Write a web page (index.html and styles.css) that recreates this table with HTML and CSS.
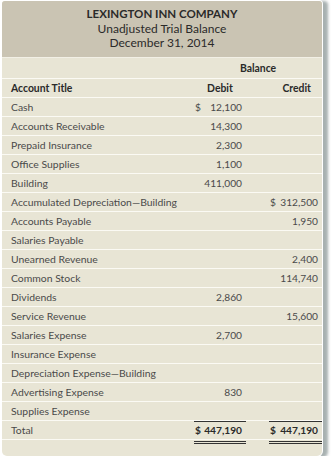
FILE: index.html
```html
<!DOCTYPE html>
<html>
<head>
<meta charset="utf-8">
<link rel="stylesheet" href="styles.css">
</head>
<body>
<div class="card">
  <div class="head">
    <div class="co">LEXINGTON INN COMPANY</div>
    <div>Unadjusted Trial Balance</div>
    <div>December 31, 2014</div>
  </div>
  <div class="row bal"><span></span><span class="span2">Balance</span></div>
  <div class="row colhead"><span>Account Title</span><span class="c">Debit</span><span class="c r">Credit</span></div>
  <div class="row"><span>Cash</span><span class="amt"><i>$</i><b>12,100</b></span><span></span></div>
  <div class="row"><span>Accounts Receivable</span><span class="amt"><b>14,300</b></span><span></span></div>
  <div class="row"><span>Prepaid Insurance</span><span class="amt"><b>2,300</b></span><span></span></div>
  <div class="row"><span>Office Supplies</span><span class="amt"><b>1,100</b></span><span></span></div>
  <div class="row"><span>Building</span><span class="amt"><b>411,000</b></span><span></span></div>
  <div class="row"><span>Accumulated Depreciation—Building</span><span></span><span class="amt"><i>$</i><b>312,500</b></span></div>
  <div class="row"><span>Accounts Payable</span><span></span><span class="amt"><b>1,950</b></span></div>
  <div class="row"><span>Salaries Payable</span><span></span><span></span></div>
  <div class="row"><span>Unearned Revenue</span><span></span><span class="amt"><b>2,400</b></span></div>
  <div class="row"><span>Common Stock</span><span></span><span class="amt"><b>114,740</b></span></div>
  <div class="row"><span>Dividends</span><span class="amt"><b>2,860</b></span><span></span></div>
  <div class="row"><span>Service Revenue</span><span></span><span class="amt"><b>15,600</b></span></div>
  <div class="row"><span>Salaries Expense</span><span class="amt"><b>2,700</b></span><span></span></div>
  <div class="row"><span>Insurance Expense</span><span></span><span></span></div>
  <div class="row"><span>Depreciation Expense—Building</span><span></span><span></span></div>
  <div class="row"><span>Advertising Expense</span><span class="amt"><b>830</b></span><span></span></div>
  <div class="row"><span>Supplies Expense</span><span></span><span></span></div>
  <div class="row total"><span>Total</span><span class="amt tot"><i>$</i><b>447,190</b></span><span class="amt tot"><i>$</i><b>447,190</b></span></div>
</div>
</body>
</html>
```
FILE: styles.css
```css
html, body {
  margin: 0;
  padding: 0;
  background: #ffffff;
}
body {
  font-family: Lato, "Open Sans", sans-serif;
}
.card {
  width: 320px;
  margin: 1px 0 0 2px;
  background: #e8e5d5;
  border-radius: 3px 3px 5px 5px;
  padding-bottom: 16px;
  box-shadow: 0 0 0 1px #ffffff, 5px 1px 3px 1px rgba(110, 125, 125, 0.6);
}
.head {
  background: #cac4b3;
  border-radius: 3px 3px 0 0;
  text-align: center;
  color: #2a2a2a;
  font-size: 12px;
  line-height: 14.5px;
  padding: 6px 0 6px;
  border-bottom: 1px solid #f2f0e6;
}
.head .co {
  font-weight: bold;
  font-size: 11.5px;
}
.row {
  display: grid;
  grid-template-columns: minmax(0, 1fr) 52px 53px;
  column-gap: 23px;
  padding-left: 9px;
  height: 18px;
  align-items: center;
  border-bottom: 1px solid #fbfaf4;
  font-size: 10.4px;
  color: #4a4a4a;
  white-space: nowrap;
}
.row.bal {
  height: 20px;
  font-weight: bold;
  color: #2a2a2a;
}
.span2 {
  grid-column: 2 / 4;
  text-align: center;
}
.colhead {
  font-weight: bold;
  color: #2a2a2a;
}
.c {
  text-align: center;
}
.c.r {
  text-align: right;
  padding-right: 11px;
}
.amt {
  display: flex;
  justify-content: flex-end;
  padding: 0 4px 0 1px;
  font-size: 10.2px;
}
.amt i {
  font-style: normal;
  margin-right: auto;
  padding-right: 3px;
}
.amt b {
  font-weight: normal;
}
.total .tot {
  align-self: start;
  box-sizing: border-box;
  height: 23px;
  margin-bottom: -5px;
  border-top: 1px solid #333333;
  border-bottom: 3px double #333333;
  align-items: center;
  padding-bottom: 2px;
  color: #2a2a2a;
}
.total .tot b,
.total .tot i {
  font-weight: bold;
}
```
